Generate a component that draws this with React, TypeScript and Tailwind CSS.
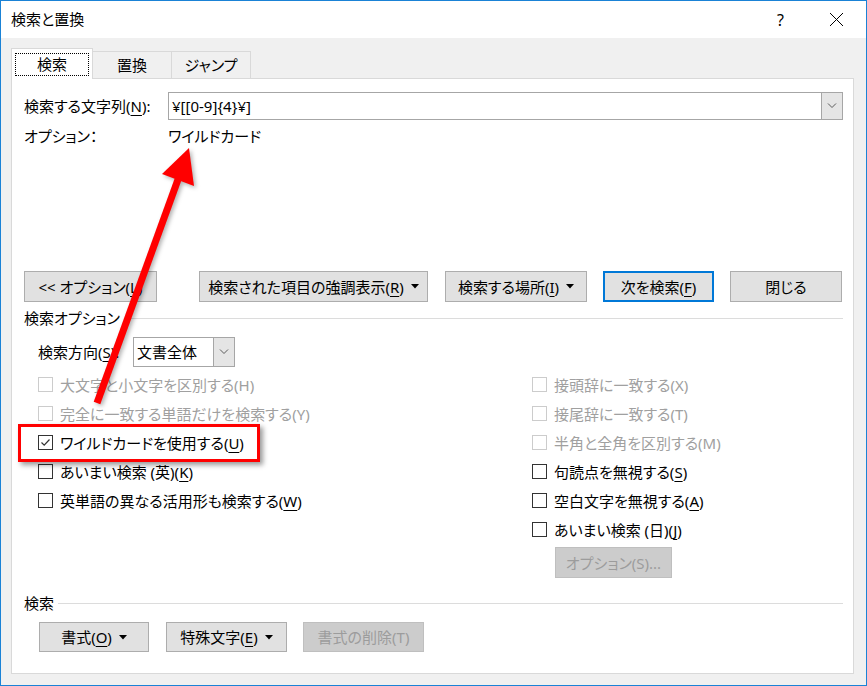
import React from 'react';

// small filled triangle used on menu buttons
const Caret = () => (
  <svg width="8" height="5" viewBox="0 0 8 5" className="ml-[7px] shrink-0">
    <path d="M0 0H8L4 4.5Z" fill="#000" />
  </svg>
);

const Chevron = () => (
  <svg width="10" height="6" viewBox="0 0 10 6">
    <path d="M1 0.5L5 4.5L9 0.5" fill="none" stroke="#5a5a5a" strokeWidth="1" />
  </svg>
);

// access key underline
const Key: React.FC<{ children: React.ReactNode }> = ({ children }) => (
  <span className="underline underline-offset-[3px] decoration-1">{children}</span>
);

interface BtnProps {
  className: string;
  children: React.ReactNode;
  caret?: boolean;
  variant?: 'normal' | 'default' | 'disabled';
}

const Btn: React.FC<BtnProps> = ({ className, children, caret, variant = 'normal' }) => {
  const look =
    variant === 'default'
      ? 'border-2 border-[#0078d7] bg-[#e1e1e1] text-black'
      : variant === 'disabled'
      ? 'border border-[#bfbfbf] bg-[#cccccc] text-[#9c9c9c]'
      : 'border border-[#adadad] bg-[#e1e1e1] text-black';
  return (
    <div className={`flex items-center justify-center shrink-0 leading-[20px] ${look} ${className}`}>
      <span className="whitespace-nowrap">{children}</span>
      {caret && <Caret />}
    </div>
  );
};

interface CheckProps {
  label: React.ReactNode;
  checked?: boolean;
  disabled?: boolean;
}

const Check: React.FC<CheckProps> = ({ label, checked, disabled }) => (
  <div className="flex items-center h-[29px]">
    <div
      className={`w-[15px] h-[15px] border bg-white flex items-center justify-center shrink-0 ${
        disabled ? 'border-[#cccccc]' : 'border-[#333333]'
      }`}
    >
      {checked && (
        <svg width="13" height="13" viewBox="0 0 13 13">
          <path d="M2.5 6.5L5.2 9.2L10.5 3.5" fill="none" stroke="#333" strokeWidth="1.2" />
        </svg>
      )}
    </div>
    <span className={`ml-[7px] leading-[20px] whitespace-nowrap ${disabled ? 'text-[#a0a0a0]' : 'text-black'}`}>
      {label}
    </span>
  </div>
);

const SectionTitle: React.FC<{ title: string; className: string }> = ({ title, className }) => (
  <div className={`flex items-center h-[20px] ${className}`}>
    <span className="leading-[20px] whitespace-nowrap">{title}</span>
    <div className="flex-1 h-px bg-[#dcdcdc] ml-[4px]" />
  </div>
);

const App: React.FC = () => {
  return (
    <div className="relative w-[867px] h-[686px] border border-[#1a82d6] bg-[#f0f0f0] flex flex-col text-[15px] text-black font-['Noto_Sans','Noto_Sans_CJK_JP',sans-serif] [font-feature-settings:'palt'] overflow-hidden">
      {/* title bar */}
      <div className="h-[37px] bg-white flex items-center pl-[10px] shrink-0">
        <span className="leading-[20px] -mt-[1px]">検索と置換</span>
        <span className="ml-auto leading-[20px] text-[16px] mr-[45px]">?</span>
        <svg width="15" height="15" viewBox="0 0 15 15" className="mr-[22px]">
          <path d="M1 1L14 14M14 1L1 14" stroke="#000" strokeWidth="1" />
        </svg>
      </div>

      {/* body */}
      <div className="flex-1 flex flex-col pl-[10px] pr-[12px] pt-[10px] pb-[11px]">
        {/* tabs */}
        <div className="flex items-end h-[30px] shrink-0">
          <div className="relative z-10 w-[82px] h-[31px] -mb-[1px] bg-white border border-b-0 border-[#d9d9d9] flex items-center justify-center">
            <div className="absolute left-[3px] right-[3px] top-[4px] bottom-[3px] border border-dotted border-black" />
            <span className="leading-[20px]">検索</span>
          </div>
          <div className="w-[79px] h-[27px] border border-l-0 border-b-0 border-[#d9d9d9] flex items-center justify-center">
            <span className="leading-[20px]">置換</span>
          </div>
          <div className="w-[79px] h-[27px] border border-l-0 border-b-0 border-[#d9d9d9] flex items-center justify-center">
            <span className="leading-[20px]">ジャンプ</span>
          </div>
        </div>

        {/* panel */}
        <div className="flex-1 bg-white border border-[#d9d9d9] pl-[12px] pr-[10px] flex flex-col">
          {/* search text */}
          <div className="flex items-center mt-[13px] h-[28px]">
            <span className="w-[144px] leading-[20px] whitespace-nowrap">
              検索する文字列(<Key>N</Key>):
            </span>
            <div className="flex-1 h-[28px] border border-[#a6a6a6] flex items-stretch">
              <span className="flex-1 pl-[3px] leading-[26px]">¥[[0-9]{'{'}4{'}'}¥]</span>
              <div className="w-[21px] bg-[#e5e5e5] border-l border-[#a6a6a6] flex items-center justify-center">
                <Chevron />
              </div>
            </div>
          </div>

          <div className="flex items-center mt-[6px] h-[20px]">
            <span className="w-[144px] leading-[20px]">オプション：</span>
            <span className="leading-[20px]">ワイルドカード</span>
          </div>

          {/* command buttons */}
          <div className="flex mt-[125px] h-[31px]">
            <Btn className="w-[133px] h-[31px]">
              {'<< '}オプション(<Key>L</Key>)
            </Btn>
            <Btn className="w-[229px] h-[31px] ml-[42px]" caret>
              検索された項目の強調表示(<Key>R</Key>)
            </Btn>
            <Btn className="w-[142px] h-[31px] ml-[17px]" caret>
              検索する場所(<Key>I</Key>)
            </Btn>
            <Btn className="w-[111px] h-[31px] ml-[16px]" variant="default">
              次を検索(<Key>F</Key>)
            </Btn>
            <Btn className="w-[112px] h-[31px] ml-[16px]">閉じる</Btn>
          </div>

          <SectionTitle title="検索オプション" className="mt-[6px]" />

          {/* direction */}
          <div className="flex items-center mt-[9px] h-[30px] pl-[14px]">
            <span className="w-[95px] leading-[20px] whitespace-nowrap">
              検索方向(<Key>S</Key>):
            </span>
            <div className="w-[102px] h-[30px] border border-[#a6a6a6] flex items-stretch">
              <span className="flex-1 pl-[3px] leading-[28px]">文書全体</span>
              <div className="w-[21px] bg-[#e5e5e5] border-l border-[#a6a6a6] flex items-center justify-center">
                <Chevron />
              </div>
            </div>
          </div>

          {/* checkbox columns */}
          <div className="flex mt-[3px] pl-[14px]">
            <div className="w-[494px] flex flex-col">
              <Check disabled label="大文字と小文字を区別する(H)" />
              <Check disabled label="完全に一致する単語だけを検索する(Y)" />
              <Check checked label={<>ワイルドカードを使用する(<Key>U</Key>)</>} />
              <Check label={<>あいまい検索 (英)(<Key>K</Key>)</>} />
              <Check label={<>英単語の異なる活用形も検索する(<Key>W</Key>)</>} />
            </div>
            <div className="flex flex-col">
              <Check disabled label="接頭辞に一致する(X)" />
              <Check disabled label="接尾辞に一致する(T)" />
              <Check disabled label="半角と全角を区別する(M)" />
              <Check label={<>句読点を無視する(<Key>S</Key>)</>} />
              <Check label={<>空白文字を無視する(<Key>A</Key>)</>} />
              <Check label={<>あいまい検索 (日)(<Key>J</Key>)</>} />
              <Btn className="w-[117px] h-[31px] ml-[23px] mt-[3px]" variant="disabled">
                オプション(S)...
              </Btn>
            </div>
          </div>

          <SectionTitle title="検索" className="mt-[15px]" />

          <div className="flex mt-[9px] pl-[15px]">
            <Btn className="w-[110px] h-[30px]" caret>
              書式(<Key>O</Key>)
            </Btn>
            <Btn className="w-[121px] h-[30px] ml-[17px]" caret>
              特殊文字(<Key>E</Key>)
            </Btn>
            <Btn className="w-[121px] h-[30px] ml-[16px]" variant="disabled">
              書式の削除(T)
            </Btn>
          </div>
        </div>
      </div>

      {/* annotation: red frame */}
      <div className="absolute left-[17px] top-[423px] w-[242px] h-[38px] border-[3px] border-[#ff0000] shadow-[3px_3px_5px_rgba(0,0,0,0.4)]" />

      {/* annotation: red arrow */}
      <svg
        width="867"
        height="686"
        viewBox="0 0 867 686"
        className="absolute -left-px -top-px pointer-events-none drop-shadow-[2px_2px_2px_rgba(0,0,0,0.3)]"
      >
        <line x1="97" y1="403" x2="180" y2="174" stroke="#ff0000" strokeWidth="7" />
        <polygon points="189,148 162,174 194,186" fill="#ff0000" />
      </svg>
    </div>
  );
};

export default App;
